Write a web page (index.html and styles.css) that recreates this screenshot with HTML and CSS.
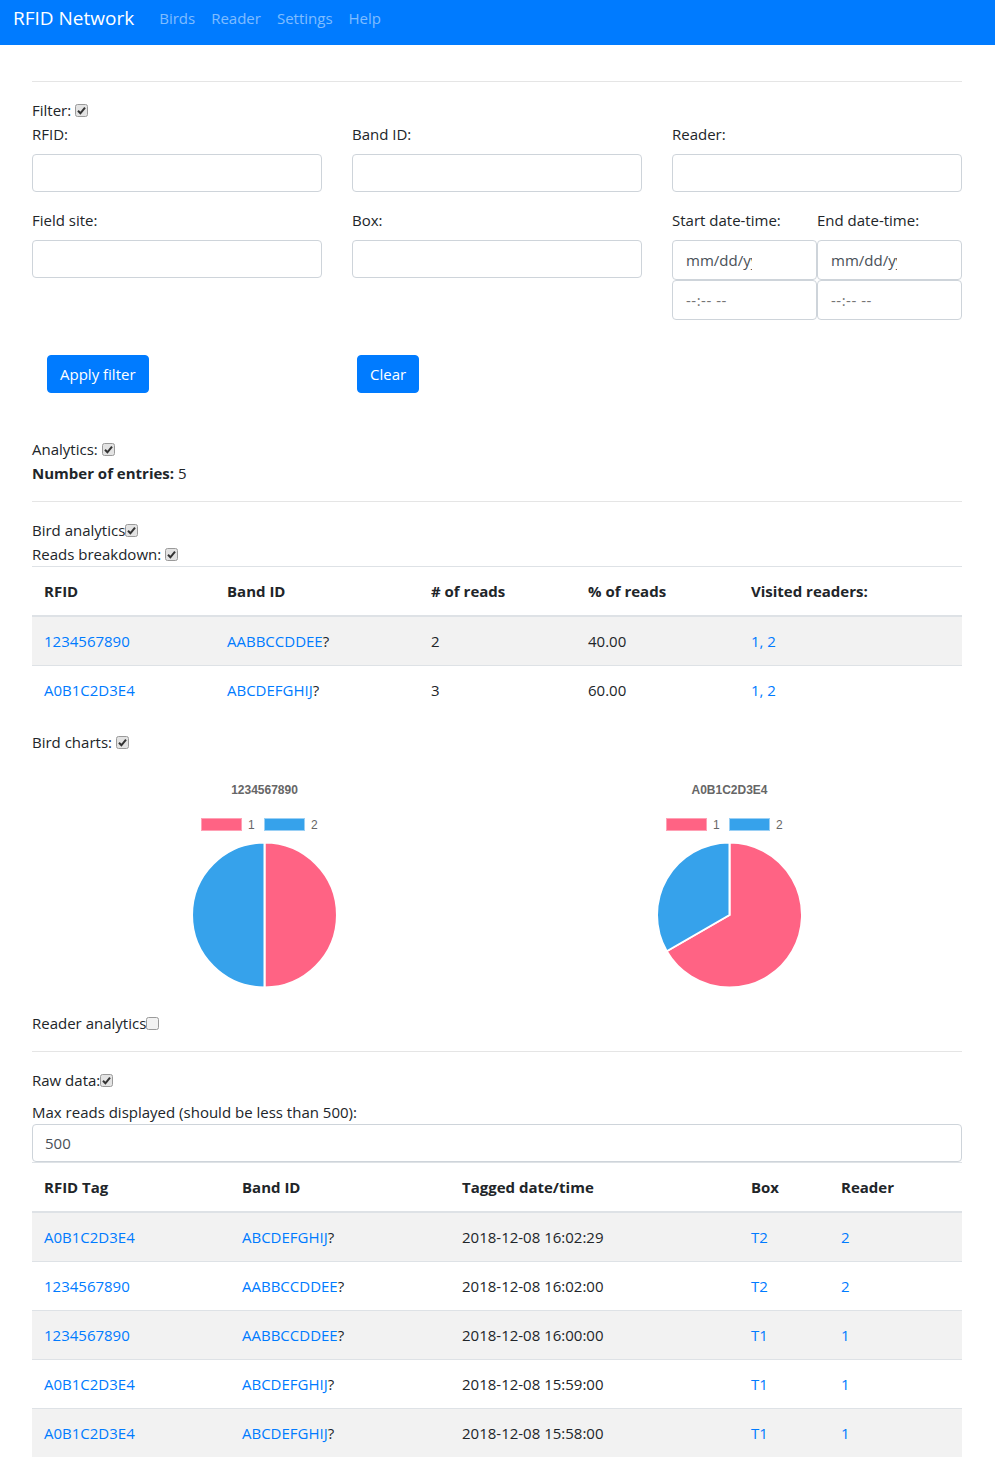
FILE: index.html
```html
<!DOCTYPE html>
<html>
<head>
<meta charset="utf-8">
<title>RFID Network</title>
<link rel="stylesheet" href="styles.css">
</head>
<body>
<nav class="navbar">
  <a class="brand" href="#">RFID Network</a>
  <a class="nav-link" href="#">Birds</a>
  <a class="nav-link" href="#">Reader</a>
  <a class="nav-link" href="#">Settings</a>
  <a class="nav-link" href="#">Help</a>
</nav>

<div class="container">
  <hr>
  <div class="line">Filter: <svg class="cb" width="13" height="13" viewBox="0 0 13 13"><rect x="0.5" y="0.5" width="12" height="12" rx="2" fill="#e3e3e3" stroke="#9a9a9a"/><path d="M3 6.8 L5.4 9.3 L10 3.6" fill="none" stroke="#333" stroke-width="2"/></svg></div>
  <div class="form-row">
    <div class="form-col">
      <label class="lbl">RFID:</label>
      <div class="input"></div>
    </div>
    <div class="form-col">
      <label class="lbl">Band ID:</label>
      <div class="input"></div>
    </div>
    <div class="form-col">
      <label class="lbl">Reader:</label>
      <div class="input"></div>
    </div>
  </div>
  <div class="form-row">
    <div class="form-col">
      <label class="lbl">Field site:</label>
      <div class="input"></div>
    </div>
    <div class="form-col">
      <label class="lbl">Box:</label>
      <div class="input"></div>
    </div>
    <div class="form-col dates">
      <div class="date-col">
        <label class="lbl">Start date-time:</label>
        <div class="dt-input"><span class="dt-clip">mm/dd/yyyy</span></div>
        <div class="dt-input time">--:-- --</div>
      </div>
      <div class="date-col">
        <label class="lbl">End date-time:</label>
        <div class="dt-input"><span class="dt-clip">mm/dd/yyyy</span></div>
        <div class="dt-input time">--:-- --</div>
      </div>
    </div>
  </div>
  <div class="btn-row">
    <div class="btn-col"><button class="btn">Apply filter</button></div>
    <div class="btn-col"><button class="btn">Clear</button></div>
  </div>

  <div class="analytics">
    <div class="line">Analytics: <svg class="cb" width="13" height="13" viewBox="0 0 13 13"><rect x="0.5" y="0.5" width="12" height="12" rx="2" fill="#e3e3e3" stroke="#9a9a9a"/><path d="M3 6.8 L5.4 9.3 L10 3.6" fill="none" stroke="#333" stroke-width="2"/></svg></div>
    <div class="line"><b>Number of entries:</b> 5</div>
  </div>
  <hr>
  <div class="line">Bird analytics<svg class="cb" width="13" height="13" viewBox="0 0 13 13"><rect x="0.5" y="0.5" width="12" height="12" rx="2" fill="#e3e3e3" stroke="#9a9a9a"/><path d="M3 6.8 L5.4 9.3 L10 3.6" fill="none" stroke="#333" stroke-width="2"/></svg></div>
  <div class="line">Reads breakdown: <svg class="cb" width="13" height="13" viewBox="0 0 13 13"><rect x="0.5" y="0.5" width="12" height="12" rx="2" fill="#e3e3e3" stroke="#9a9a9a"/><path d="M3 6.8 L5.4 9.3 L10 3.6" fill="none" stroke="#333" stroke-width="2"/></svg></div>

  <table class="table">
    <colgroup><col class="w183"><col class="w204"><col class="w157"><col class="w163"><col class="w223"></colgroup>
    <thead>
      <tr><th>RFID</th><th>Band ID</th><th># of reads</th><th>% of reads</th><th>Visited readers:</th></tr>
    </thead>
    <tbody>
      <tr><td><a href="#">1234567890</a></td><td><a href="#">AABBCCDDEE</a>?</td><td>2</td><td>40.00</td><td><a href="#">1, 2</a></td></tr>
      <tr><td><a href="#">A0B1C2D3E4</a></td><td><a href="#">ABCDEFGHIJ</a>?</td><td>3</td><td>60.00</td><td><a href="#">1, 2</a></td></tr>
    </tbody>
  </table>

  <div class="line">Bird charts: <svg class="cb" width="13" height="13" viewBox="0 0 13 13"><rect x="0.5" y="0.5" width="12" height="12" rx="2" fill="#e3e3e3" stroke="#9a9a9a"/><path d="M3 6.8 L5.4 9.3 L10 3.6" fill="none" stroke="#333" stroke-width="2"/></svg></div>
  <div class="charts">
    <svg class="chart" width="465" height="257" viewBox="0 0 465 257">
      <text class="chart-title" x="232.5" y="40" text-anchor="middle">1234567890</text>
      <rect x="169.5" y="64.5" width="40" height="12" fill="#ff6384" stroke="#ffa1b5"/>
      <text class="legend" x="216" y="75">1</text>
      <rect x="232.5" y="64.5" width="40" height="12" fill="#36a2eb" stroke="#9ad0f5"/>
      <text class="legend" x="279" y="75">2</text>
      <path d="M232.5 161 L232.5 88.5 A72.5 72.5 0 0 1 232.5 233.5 Z" fill="#ff6384" stroke="#fff" stroke-width="2"/>
      <path d="M232.5 161 L232.5 233.5 A72.5 72.5 0 0 1 232.5 88.5 Z" fill="#36a2eb" stroke="#fff" stroke-width="2"/>
    </svg>
    <svg class="chart" width="465" height="257" viewBox="0 0 465 257">
      <text class="chart-title" x="232.5" y="40" text-anchor="middle">A0B1C2D3E4</text>
      <rect x="169.5" y="64.5" width="40" height="12" fill="#ff6384" stroke="#ffa1b5"/>
      <text class="legend" x="216" y="75">1</text>
      <rect x="232.5" y="64.5" width="40" height="12" fill="#36a2eb" stroke="#9ad0f5"/>
      <text class="legend" x="279" y="75">2</text>
      <path d="M232.5 161 L232.5 88.5 A72.5 72.5 0 1 1 169.71 197.25 Z" fill="#ff6384" stroke="#fff" stroke-width="2"/>
      <path d="M232.5 161 L169.71 197.25 A72.5 72.5 0 0 1 232.5 88.5 Z" fill="#36a2eb" stroke="#fff" stroke-width="2"/>
    </svg>
  </div>

  <div class="line">Reader analytics<svg class="cb" width="13" height="13" viewBox="0 0 13 13"><rect x="0.5" y="0.5" width="12" height="12" rx="2" fill="#f2f2f2" stroke="#9a9a9a"/></svg></div>
  <hr>
  <div class="line">Raw data:<svg class="cb" width="13" height="13" viewBox="0 0 13 13"><rect x="0.5" y="0.5" width="12" height="12" rx="2" fill="#e3e3e3" stroke="#9a9a9a"/><path d="M3 6.8 L5.4 9.3 L10 3.6" fill="none" stroke="#333" stroke-width="2"/></svg></div>
  <div class="raw-gap line">Max reads displayed (should be less than 500):</div>
  <div class="input value">500</div>

  <table class="table">
    <colgroup><col class="w198"><col class="w220"><col class="w289"><col class="w90"><col class="w133"></colgroup>
    <thead>
      <tr><th>RFID Tag</th><th>Band ID</th><th>Tagged date/time</th><th>Box</th><th>Reader</th></tr>
    </thead>
    <tbody>
      <tr><td><a href="#">A0B1C2D3E4</a></td><td><a href="#">ABCDEFGHIJ</a>?</td><td>2018-12-08 16:02:29</td><td><a href="#">T2</a></td><td><a href="#">2</a></td></tr>
      <tr><td><a href="#">1234567890</a></td><td><a href="#">AABBCCDDEE</a>?</td><td>2018-12-08 16:02:00</td><td><a href="#">T2</a></td><td><a href="#">2</a></td></tr>
      <tr><td><a href="#">1234567890</a></td><td><a href="#">AABBCCDDEE</a>?</td><td>2018-12-08 16:00:00</td><td><a href="#">T1</a></td><td><a href="#">1</a></td></tr>
      <tr><td><a href="#">A0B1C2D3E4</a></td><td><a href="#">ABCDEFGHIJ</a>?</td><td>2018-12-08 15:59:00</td><td><a href="#">T1</a></td><td><a href="#">1</a></td></tr>
      <tr><td><a href="#">A0B1C2D3E4</a></td><td><a href="#">ABCDEFGHIJ</a>?</td><td>2018-12-08 15:58:00</td><td><a href="#">T1</a></td><td><a href="#">1</a></td></tr>
    </tbody>
  </table>
</div>
</body>
</html>
```

FILE: styles.css
```css
* { box-sizing: border-box; }
html, body { margin: 0; padding: 0; }
body {
  font-family: "Open Sans", "Noto Sans", "Liberation Sans", sans-serif;
  font-size: 15px;
  line-height: 24px;
  color: #212529;
  background: #fff;
}
a { color: #007bff; text-decoration: none; }

.navbar {
  height: 45px;
  background: #007bff;
  display: flex;
  align-items: flex-start;
  padding: 3px 0 0 13px;
}
.brand {
  color: #fff;
  font-size: 19px;
  line-height: 30px;
  margin-right: 8px;
}
.nav-link {
  color: rgba(255,255,255,.5);
  font-size: 15px;
  line-height: 30px;
  padding: 0 8px;
}
.navbar .brand + .nav-link { margin-left: 9px; }

.container {
  width: 930px;
  margin: 0 0 0 32px;
  padding: 20px 0;
}
hr {
  border: 0;
  border-top: 1px solid rgba(0,0,0,.1);
  margin: 16px 0;
  height: 0;
}
.line { height: 24px; white-space: nowrap; }
.cb { vertical-align: -1px; }

.lbl { display: block; margin-bottom: 8px; height: 24px; white-space: nowrap; }
.form-row { display: flex; gap: 30px; margin-bottom: 16px; }
.form-col { width: 290px; }
.input {
  height: 38px;
  border: 1px solid #ced4da;
  border-radius: 4px;
  background: #fff;
}
.input.value {
  padding: 6px 12px;
  line-height: 24px;
  color: #495057;
}
.dates { display: flex; }
.date-col { width: 145px; }
.dt-input {
  height: 40px;
  border: 1px solid #ced4da;
  border-radius: 4px;
  padding: 7px 13px;
  color: #495057;
  line-height: 24px;
  white-space: nowrap;
}
.dt-clip { display: inline-block; width: 66px; overflow: hidden; vertical-align: top; }
.dt-input.time { color: #757575; letter-spacing: 0.5px; }

.btn-row { display: flex; margin-top: 35px; }
.btn-col { width: 310px; padding: 0 15px; }
.btn {
  font-family: inherit;
  font-size: 15px;
  line-height: 24px;
  color: #fff;
  background: #007bff;
  border: 1px solid #007bff;
  border-radius: 4px;
  padding: 6px 12px;
  height: 38px;
}
.analytics { margin-top: 44px; }

.table {
  width: 100%;
  border-collapse: collapse;
  table-layout: fixed;
  margin-bottom: 16px;
}
.table th, .table td {
  text-align: left;
  padding: 12px;
  line-height: 24px;
  border-top: 1px solid #dee2e6;
  white-space: nowrap;
}
.table th { font-weight: 700; border-bottom: 2px solid #dee2e6; }
.table tbody tr:nth-child(odd) { background: rgba(0,0,0,.05); }
.table tbody tr:first-child td { border-top: 0; }

.w183 { width: 183px; } .w204 { width: 204px; } .w157 { width: 157px; } .w163 { width: 163px; } .w223 { width: 223px; }
.w198 { width: 198px; } .w220 { width: 220px; } .w289 { width: 289px; } .w90 { width: 90px; } .w133 { width: 133px; }

.charts { display: flex; height: 257px; }
.chart { display: block; }
.chart-title { font-family: "Liberation Sans", Arial, sans-serif; font-size: 12px; font-weight: 700; fill: #666; }
.legend { font-family: "Liberation Sans", Arial, sans-serif; font-size: 12px; fill: #666; }
.raw-gap { margin-top: 8px; }
```
